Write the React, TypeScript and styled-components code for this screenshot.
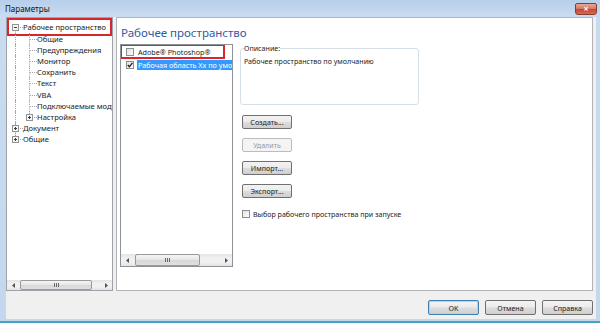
import React from "react";
import styled, { createGlobalStyle, css } from "styled-components";

const GlobalStyle = createGlobalStyle`
  html, body { margin: 0; padding: 0; background: #fff; }
  body { font-family: "Noto Sans", "DejaVu Sans", sans-serif; color: #1b1b1b; }
  #root { width: 600px; height: 323px; }
`;

type TreeNode = {
  label: string;
  level: number;
  expander?: "plus" | "minus";
  guides: boolean[];
  first?: boolean;
  last?: boolean;
  highlighted?: boolean;
};

const nodes: TreeNode[] = [
  { label: "Рабочее пространство", level: 0, expander: "minus", guides: [], first: true, highlighted: true },
  { label: "Общие", level: 1, guides: [true] },
  { label: "Предупреждения", level: 1, guides: [true] },
  { label: "Монитор", level: 1, guides: [true] },
  { label: "Сохранить", level: 1, guides: [true] },
  { label: "Текст", level: 1, guides: [true] },
  { label: "VBA", level: 1, guides: [true] },
  { label: "Подключаемые модули", level: 1, guides: [true] },
  { label: "Настройка", level: 1, expander: "plus", guides: [true], last: true },
  { label: "Документ", level: 0, expander: "plus", guides: [] },
  { label: "Общие", level: 0, expander: "plus", guides: [], last: true },
];

const Window = styled.div`
  width: 600px;
  height: 323px;
  box-sizing: border-box;
  display: flex;
  flex-direction: column;
  background: linear-gradient(180deg, #b7cfea 0%, #c8dbf1 16px, #c3d8ef 100%);
  border-bottom: 2px solid #46a3c4;
  overflow: hidden;
`;

const TitleBar = styled.div`
  height: 17px;
  flex: none;
  display: flex;
  align-items: flex-start;
  padding: 0 3px 0 5px;
`;

const Title = styled.span`
  font-size: 8px;
  line-height: 10px;
  margin-top: 4px;
  color: #111;
`;

const CloseButton = styled.div`
  margin-left: auto;
  margin-top: 3px;
  width: 22px;
  height: 12px;
  box-sizing: border-box;
  border: 1px solid #8a3b31;
  border-radius: 2px 2px 3px 3px;
  background: linear-gradient(180deg, #e9a99a 0%, #d67a66 45%, #c44633 50%, #d36a52 100%);
  color: #fff;
  font-size: 9px;
  line-height: 10px;
  font-weight: bold;
  text-align: center;
`;

const Body = styled.div`
  flex: 1;
  min-height: 0;
  margin: 0 4px 2px 6px;
  background: #f0f0f0;
  display: flex;
  flex-direction: column;
`;

const MainRow = styled.div`
  height: 274px;
  flex: none;
  display: flex;
  gap: 3px;
  padding-right: 3px;
`;

const TreePanel = styled.div`
  width: 107px;
  flex: none;
  box-sizing: border-box;
  border: 1px solid #9ea3aa;
  background: #fff;
  display: flex;
  flex-direction: column;
  overflow: hidden;
`;

const Tree = styled.div`
  flex: 1;
  padding-top: 4.4px;
`;

const TreeRow = styled.div<{ $highlighted?: boolean }>`
  height: 11.2px;
  display: flex;
  align-items: center;
  padding-left: 2px;
  font-size: 7.6px;
  white-space: nowrap;
  ${({ $highlighted }) =>
    $highlighted &&
    css`
      height: auto;
      border: 2px solid #d9262b;
      padding: 2px 0 0 0;
      margin: -4px 0 -2px 0;
      > * { height: 11.2px; }
    `}
`;

const TreeCell = styled.svg`
  flex: none;
  display: block;
  overflow: visible;
`;

const TreeLabel = styled.span`
  line-height: 11.2px;
`;

const dot = { stroke: "#a6a6a6", strokeDasharray: "1 1" };

const Guide = ({ on }: { on: boolean }) => (
  <TreeCell width="14" height="11">
    {on && <line x1="6.5" y1="-1" x2="6.5" y2="12" {...dot} />}
  </TreeCell>
);

const Connector = ({ node }: { node: TreeNode }) => (
  <TreeCell width="14" height="11">
    {!node.first && <line x1="6.5" y1="-1" x2="6.5" y2="5.5" {...dot} />}
    {!node.last && <line x1="6.5" y1="5.5" x2="6.5" y2="12" {...dot} />}
    <line x1="7" y1="5.5" x2="14" y2="5.5" {...dot} />
    {node.expander && (
      <g>
        <rect x="3.5" y="2.5" width="6" height="6" fill="#f7f7f7" stroke="#939393" />
        <line x1="5" y1="5.5" x2="8" y2="5.5" stroke="#3a3a3a" />
        {node.expander === "plus" && <line x1="6.5" y1="4" x2="6.5" y2="7" stroke="#3a3a3a" />}
      </g>
    )}
  </TreeCell>
);

const ScrollBar = styled.div<{ $height: number }>`
  flex: none;
  height: ${({ $height }) => $height}px;
  display: flex;
  background: linear-gradient(180deg, #e4e4e4 0%, #f1f1f1 35%, #f1f1f1 65%, #e4e4e4 100%);
`;

const ArrowButton = styled.div`
  width: 12px;
  flex: none;
  display: flex;
  align-items: center;
  justify-content: center;
`;

const Track = styled.div`
  flex: 1;
  display: flex;
`;

const Thumb = styled.div<{ $offset: number; $width: number }>`
  margin-left: ${({ $offset }) => $offset}px;
  width: ${({ $width }) => $width}px;
  box-sizing: border-box;
  border: 1px solid #999;
  border-radius: 2px;
  background: linear-gradient(180deg, #f5f5f5 0%, #e6e6e6 48%, #d7d7d7 52%, #e0e0e0 100%);
  display: flex;
  align-items: center;
  justify-content: center;
`;

const Arrow = ({ dir }: { dir: "left" | "right" }) => (
  <svg width="3" height="5">
    <polygon points={dir === "left" ? "3,0 0,2.5 3,5" : "0,0 3,2.5 0,5"} fill="#555" />
  </svg>
);

const Grip = () => (
  <svg width="5" height="4">
    <rect x="0" y="0" width="1" height="4" fill="#6a6a6a" />
    <rect x="2" y="0" width="1" height="4" fill="#6a6a6a" />
    <rect x="4" y="0" width="1" height="4" fill="#6a6a6a" />
  </svg>
);

const HScroll = ({ height, offset, width }: { height: number; offset: number; width: number }) => (
  <ScrollBar $height={height}>
    <ArrowButton><Arrow dir="left" /></ArrowButton>
    <Track>
      <Thumb $offset={offset} $width={width}><Grip /></Thumb>
    </Track>
    <ArrowButton><Arrow dir="right" /></ArrowButton>
  </ScrollBar>
);

const RightPanel = styled.div`
  flex: 1;
  box-sizing: border-box;
  border: 1px solid #b4b4b4;
  background: #fff;
  padding: 0 0 0 3px;
  display: flex;
  flex-direction: column;
`;

const Heading = styled.div`
  font-size: 11.5px;
  line-height: 13px;
  color: #2d5ca4;
  margin: 7.5px 0 5.5px 1px;
`;

const Content = styled.div`
  display: flex;
  gap: 7px;
  align-items: flex-start;
`;

const ListBox = styled.div`
  width: 113px;
  height: 223px;
  box-sizing: border-box;
  border: 1px solid #8d9299;
  display: flex;
  flex-direction: column;
  overflow: hidden;
`;

const ListItems = styled.div`
  flex: 1;
`;

const ListItem = styled.div<{ $highlighted?: boolean }>`
  height: 12px;
  display: flex;
  align-items: center;
  padding-left: 5px;
  font-size: 7.2px;
  white-space: nowrap;
  ${({ $highlighted }) =>
    $highlighted &&
    css`
      width: 105px;
      height: 15px;
      box-sizing: border-box;
      border: 2px solid #d9262b;
      margin: -1px 0 0 -1px;
      padding-left: 4px;
    `}
`;

const ItemText = styled.span<{ $selected?: boolean }>`
  margin-left: 3px;
  padding: 0 1px;
  line-height: 10px;
  ${({ $selected }) =>
    $selected &&
    css`
      flex: 1;
      background: #3399ff;
      color: #fff;
      overflow: hidden;
    `}
`;

const Box = styled.span`
  width: 8px;
  height: 8px;
  flex: none;
  box-sizing: border-box;
  border: 1px solid #8e8f8f;
  background: linear-gradient(135deg, #e2e2e2, #fbfbfb);
  display: flex;
  align-items: center;
  justify-content: center;
`;

const CheckBox = ({ checked }: { checked?: boolean }) => (
  <Box>
    {checked && (
      <svg width="6" height="6">
        <path d="M0.8 3 L2.4 4.8 L5.4 0.8" fill="none" stroke="#1a1a1a" strokeWidth="1.3" />
      </svg>
    )}
  </Box>
);

const SideColumn = styled.div`
  width: 179px;
  display: flex;
  flex-direction: column;
`;

const Fieldset = styled.fieldset`
  margin: 0;
  height: 61px;
  box-sizing: border-box;
  padding: 0 3px 0 3px;
  border: 1px solid #d5dfe5;
  border-radius: 3px;
`;

const Legend = styled.legend`
  padding: 0;
  font-size: 7.1px;
  line-height: 9px;
  color: #222;
`;

const FieldText = styled.div`
  font-size: 7.1px;
  line-height: 10px;
  margin-top: 3px;
`;

const ButtonStack = styled.div`
  display: flex;
  flex-direction: column;
  gap: 9px;
  margin: 10px 0 0 2px;
`;

const Button = styled.div<{ $disabled?: boolean; $default?: boolean; $w?: number; $h?: number }>`
  width: ${({ $w }) => $w ?? 50}px;
  height: ${({ $h }) => $h ?? 14}px;
  box-sizing: border-box;
  border: 1px solid #707070;
  border-radius: 2px;
  background: linear-gradient(180deg, #f3f3f3 0%, #ebebeb 48%, #dddddd 52%, #cfcfcf 100%);
  font-size: 7.1px;
  color: #1b1b1b;
  display: flex;
  align-items: center;
  justify-content: center;
  ${({ $disabled }) =>
    $disabled &&
    css`
      border-color: #b9bdc0;
      background: #f4f4f4;
      color: #9a9a9a;
    `}
  ${({ $default }) =>
    $default &&
    css`
      border-color: #3c7fb1;
      box-shadow: inset 0 0 0 1px #a9d7f4;
    `}
`;

const CheckRow = styled.div`
  display: flex;
  align-items: center;
  gap: 3px;
  margin: 11px 0 0 2px;
  font-size: 7.1px;
  line-height: 10px;
  white-space: nowrap;
`;

const Footer = styled.div`
  flex: 1;
  display: flex;
  justify-content: flex-end;
  align-items: flex-start;
  gap: 6px;
  padding: 9px 3px 0 0;
`;

export default function App() {
  return (
    <>
      <GlobalStyle />
      <Window>
        <TitleBar>
          <Title>Параметры</Title>
          <CloseButton>×</CloseButton>
        </TitleBar>
        <Body>
          <MainRow>
            <TreePanel>
              <Tree>
                {nodes.map((node, i) => (
                  <TreeRow key={i} $highlighted={node.highlighted}>
                    {node.guides.map((g, j) => (
                      <Guide key={j} on={g} />
                    ))}
                    <Connector node={node} />
                    <TreeLabel>{node.label}</TreeLabel>
                  </TreeRow>
                ))}
              </Tree>
              <HScroll height={10} offset={1} width={72} />
            </TreePanel>
            <RightPanel>
              <Heading>Рабочее пространство</Heading>
              <Content>
                <ListBox>
                  <ListItems>
                    <ListItem $highlighted>
                      <CheckBox />
                      <ItemText>Adobe® Photoshop®</ItemText>
                    </ListItem>
                    <ListItem>
                      <CheckBox checked />
                      <ItemText $selected>Рабочая область Xx по умолчанию</ItemText>
                    </ListItem>
                  </ListItems>
                  <HScroll height={12} offset={2} width={65} />
                </ListBox>
                <SideColumn>
                  <Fieldset>
                    <Legend>Описание:</Legend>
                    <FieldText>Рабочее пространство по умолчанию</FieldText>
                  </Fieldset>
                  <ButtonStack>
                    <Button>Создать...</Button>
                    <Button $disabled>Удалить</Button>
                    <Button>Импорт...</Button>
                    <Button>Экспорт...</Button>
                  </ButtonStack>
                  <CheckRow>
                    <CheckBox />
                    <span>Выбор рабочего пространства при запуске</span>
                  </CheckRow>
                </SideColumn>
              </Content>
            </RightPanel>
          </MainRow>
          <Footer>
            <Button $default $w={51} $h={15}>OK</Button>
            <Button $w={51} $h={15}>Отмена</Button>
            <Button $w={51} $h={15}>Справка</Button>
          </Footer>
        </Body>
      </Window>
    </>
  );
}
